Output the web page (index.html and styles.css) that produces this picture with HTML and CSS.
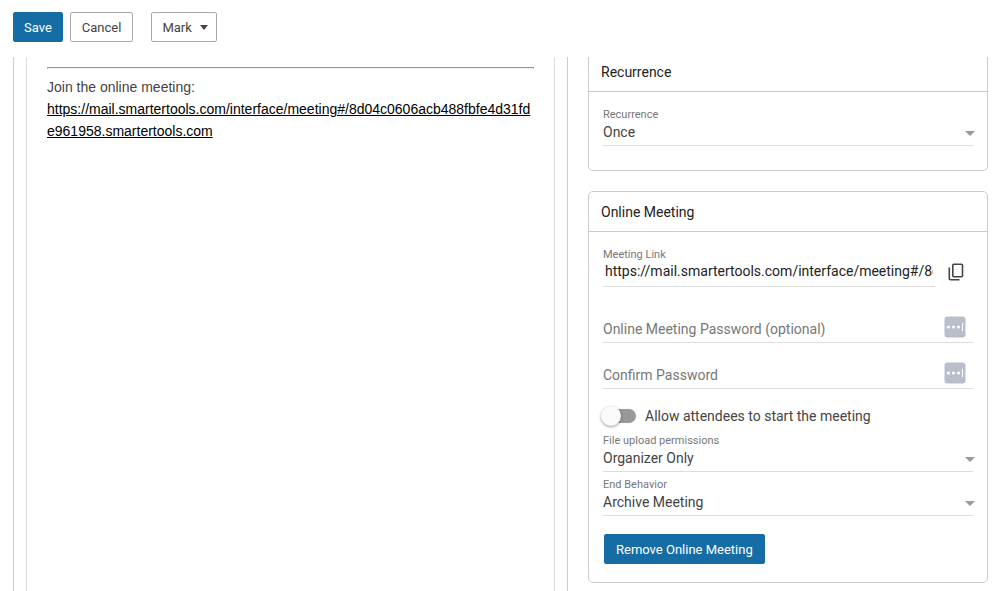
FILE: index.html
```html
<!doctype html>
<html lang="en">
	<head>
		<title>Online Meeting</title>
		<meta charset="utf-8"/>
		<link rel="stylesheet" href="styles.css">
	</head>
	<body>
		<div class="toolbar">
			<button class="btn primary">Save</button>
			<button class="btn">Cancel</button>
			<button class="btn mark">Mark <span class="caret"></span></button>
		</div>

		<div class="workspace">
			<div class="editorPane">
				<div class="editor">
					<hr/>
					<p>Join the online meeting:</p>
					<a href="#">https://mail.smartertools.com/interface/meeting#/8d04c0606acb488fbfe4d31fde961958.smartertools.com</a>
				</div>
			</div>

			<div class="side">
				<div class="card scrolled">
					<h3>Recurrence</h3>
					<div class="cardBody">
						<div class="field">
							<label for="recurrence">Recurrence</label>
							<div class="select">
								<select id="recurrence"><option>Once</option></select>
							</div>
						</div>
					</div>
				</div>

				<div class="card meeting">
					<h3>Online Meeting</h3>
					<div class="cardBody">
						<div class="linkRow">
							<div class="field">
								<label for="link">Meeting Link</label>
								<input type="text" id="link" readonly value="https://mail.smartertools.com/interface/meeting#/8d04c0606acb488fbfe4d31fde961958.smartertools.com"/>
							</div>
							<button class="copy" aria-label="Copy link">
								<svg width="18" height="18" viewBox="0 0 18 18" fill="none" stroke="#444" stroke-width="1.6"><rect x="5.800" y="1.300" width="9.700" height="12.400" rx="1"/><path d="M2.300 4.500V15.500a1.200 1.200 0 0 0 1.200 1.200H12.500"/></svg>
							</button>
						</div>

						<div class="password">
							<input type="password" placeholder="Online Meeting Password (optional)" aria-label="Online Meeting Password (optional)"/>
							<svg class="key" width="22" height="22" viewBox="0 0 22 22"><rect width="21" height="21" x="0.500" y="0.500" rx="3" fill="#b8bfca"/><g fill="#fff"><circle cx="4.500" cy="11" r="1.600"/><circle cx="9.500" cy="11" r="1.600"/><circle cx="14.500" cy="11" r="1.600"/><rect x="18" y="7" width="1" height="8"/></g></svg>
						</div>
						<div class="password">
							<input type="password" placeholder="Confirm Password" aria-label="Confirm Password"/>
							<svg class="key" width="22" height="22" viewBox="0 0 22 22"><rect width="21" height="21" x="0.500" y="0.500" rx="3" fill="#b8bfca"/><g fill="#fff"><circle cx="4.500" cy="11" r="1.600"/><circle cx="9.500" cy="11" r="1.600"/><circle cx="14.500" cy="11" r="1.600"/><rect x="18" y="7" width="1" height="8"/></g></svg>
						</div>

						<div class="toggle">
							<input type="checkbox" id="allow"/><label for="allow">Allow attendees to start the meeting</label>
						</div>

						<div class="field">
							<label for="upload">File upload permissions</label>
							<div class="select">
								<select id="upload"><option>Organizer Only</option></select>
							</div>
						</div>
						<div class="field">
							<label for="end">End Behavior</label>
							<div class="select">
								<select id="end"><option>Archive Meeting</option></select>
							</div>
						</div>

						<button class="btn primary remove">Remove Online Meeting</button>
					</div>
				</div>
			</div>
		</div>
	</body>
</html>
```
FILE: styles.css
```css
*{
	padding:0;margin:0;
	box-sizing:border-box;
}

body{
	background-color:#fff;
	color:#444;
	font-family:Roboto, sans-serif;
	font-size:14px;
	line-height:20px;
	min-height:100vh;
	display:flex;
	flex-direction:column;
}

input, select, button{
	font-family:inherit;
	font-size:14px;
	color:inherit;
}

.toolbar{
	display:flex;
	gap:7px;
	padding:12px 13px 15px;
}

.btn{
	height:30px;
	padding:0 11px;
	border:1px solid #aaa;
	border-radius:2px;
	background-color:#fff;
	font-size:13px;
	cursor:pointer;
}

.btn.primary{
	padding:0 10px;
	border-color:#166da5;
	background-color:#166da5;
	color:#fff;
}

.btn.mark{
	display:flex;
	align-items:center;
	gap:8px;
	margin-left:11px;
	padding:0 8px 0 10px;
}

.caret{
	border:4px solid transparent;
	border-top:5px solid #444;
	border-bottom:0;
}

.workspace{
	flex:1;
	display:grid;
	grid-template-columns:minmax(0, 1fr) 400px;
	gap:20px;
	padding:0 16px 0 13px;
}

.editorPane{
	display:flex;
	padding:0 12px;
	border:solid #ccc;
	border-width:0 1px;
}

.editor{
	flex:1;
	padding:10px 20px;
	border:solid #ddd;
	border-width:0 1px;
	font-family:"Liberation Sans", sans-serif;
	line-height:22px;
}

.editor hr{
	margin-bottom:7px;
	border:1px solid #999;
	border-bottom-color:#eee;
}

.editor a{
	color:#000;
	word-break:break-all;
}

.side{
	padding-bottom:8px;
}

.card{
	border:1px solid #ccc;
	border-radius:5px;
}

.card h3{
	padding:10px 12px 9px;
	border-bottom:1px solid #ccc;
	color:#222;
	font-size:14px;
	font-weight:normal;
}

.cardBody{
	padding:16px 14px 24px;
}

/* top edge is scrolled under the toolbar */
.scrolled{
	border-top:0;
	border-radius:0 0 5px 5px;
	margin-bottom:20px;
}

.scrolled h3{
	padding-top:5px;
}

.meeting .cardBody{
	padding-bottom:18px;
}

.field label{
	display:block;
	color:#777;
	font-size:11px;
	line-height:14px;
}

.field + .field{
	margin-top:6px;
}

.select{
	position:relative;
}

.select::after{
	content:"";
	position:absolute;
	top:9px;
	right:-2px;
	border:5px solid transparent;
	border-top-color:#999;
	border-bottom:0;
	pointer-events:none;
}

select{
	display:block;
	appearance:none;
	width:100%;
	height:24px;
	padding-bottom:3px;
	border:0;
	border-bottom:1px solid #ddd;
	background:none;
}

input[type=text], input[type=password]{
	display:block;
	width:100%;
	border:0;
	border-bottom:1px solid #ddd;
	background:none;
	outline:none;
}

input[type=text]{
	height:25px;
	padding:0 2px 6px;
	color:#222;
}

input[type=password]{
	height:27px;
}

input::placeholder{
	color:#777;
}

.linkRow{
	display:flex;
	align-items:flex-end;
	margin-bottom:29px;
}

.linkRow .field{
	flex:1;
}

.copy{
	display:flex;
	align-items:center;
	justify-content:center;
	width:24px;
	height:24px;
	margin:0 5px 3px 9px;
	border:0;
	background:none;
	cursor:pointer;
}

.password{
	position:relative;
}

.password + .password{
	margin-top:19px;
}

.key{
	position:absolute;
	top:0;
	right:7px;
}

.toggle{
	display:flex;
	align-items:center;
	gap:9px;
	margin:17px 0 8px;
}

.toggle input{
	appearance:none;
	display:flex;
	align-items:center;
	width:33px;
	height:14px;
	border-radius:7px;
	background-color:#999;
	cursor:pointer;
}

.toggle input::before{
	content:"";
	width:20px;
	height:20px;
	margin-left:-2px;
	flex-shrink:0;
	border-radius:50%;
	background-color:#fafafa;
	box-shadow:0 1px 3px rgba(0,0,0,0.4);
}

.toggle input:checked::before{
	margin-left:15px;
}

.btn.remove{
	margin:18px 0 0 1px;
	padding:0 11px;
}
```
